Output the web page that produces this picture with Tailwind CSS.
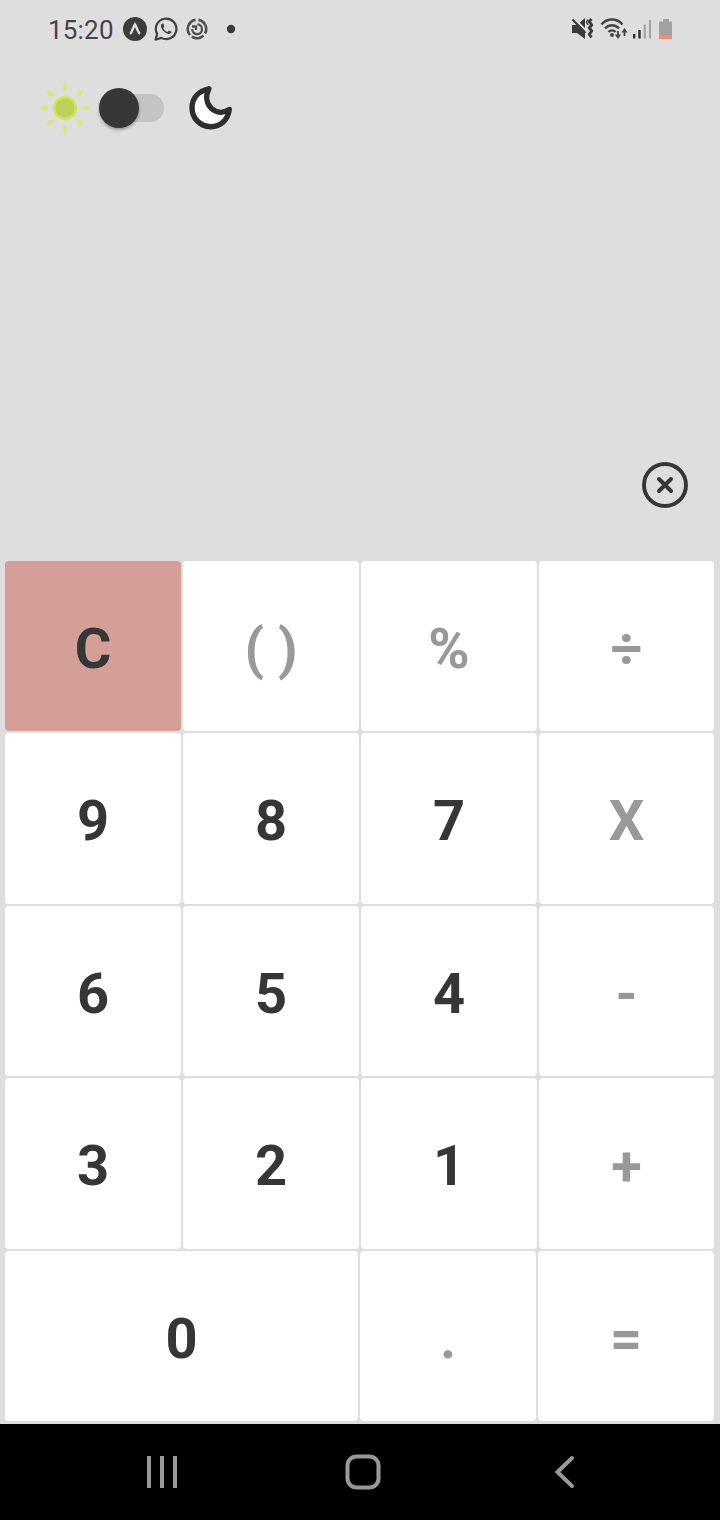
<!DOCTYPE html>
<html lang="en">
<head>
<meta charset="utf-8">
<title>Calculator</title>
<script src="https://cdn.jsdelivr.net/npm/@tailwindcss/browser@4"></script>
</head>
<body class="w-[720px] h-[1520px] overflow-hidden bg-[#dedede] font-['Roboto',sans-serif] text-[#363636] flex flex-col">

<header class="h-[58px] pl-[48px] pr-[46px] flex items-center justify-between shrink-0">
  <div class="flex items-center h-full">
    <span class="w-[75px] text-[26px] leading-none tracking-[0.2px] text-[#444] pt-px">15:20</span>
    <svg width="24" height="24" viewBox="0 0 24 24"><circle cx="12" cy="12" r="12" fill="#3c3c3c"/><path d="M7.800 16.200C9.500 13.500 10.700 9.500 12 7.500C13.300 9.500 14.500 13.500 16.200 16.200" fill="none" stroke="#dedede" stroke-width="2.400" stroke-linecap="round"/></svg>
    <svg class="ml-[7px]" width="24" height="24" viewBox="0 0 24 24"><path d="M1.500 22.700L3.200 17A10.300 10.300 0 1 1 7.200 20.900Z" fill="none" stroke="#404040" stroke-width="2.200" stroke-linejoin="round"/><path d="M8.500 6.500C7.300 6.800 6.700 8 7 9.500C7.700 13 11 16.300 14.500 17C16 17.200 17.400 16.200 17.500 14.800L14.900 13.400L13.500 15C11.700 14.300 10 12.700 9.200 10.900L10.400 9.500L9.300 6.600Z" fill="#404040"/></svg>
    <svg class="ml-[8px]" width="22" height="22" viewBox="0 0 22 22" fill="none" stroke="#505050" stroke-width="2.600"><path d="M9.500 1.900A9.200 9.200 0 0 0 4 17M5.800 18.600A9.200 9.200 0 0 0 17.500 17.600M19 15.500A9.200 9.200 0 0 0 12.500 1.900"/><path d="M6.200 11A4.900 4.900 0 1 0 11.500 6.300M6 8.500H10V12" stroke-width="2.300"/></svg>
    <svg class="ml-[18px]" width="10" height="10" viewBox="0 0 10 10"><circle cx="5" cy="5" r="4.200" fill="#3c3c3c"/></svg>
  </div>
  <div class="flex items-center h-full">
    <svg width="103" height="24" viewBox="0 0 103 24">
      <path d="M1 8H6L14 1V22L6 16H1Z" fill="#3a3a3a"/>
      <path d="M2.500 1L16 14.500" stroke="#dedede" stroke-width="2.200"/>
      <path d="M1.500 2.500L14.500 16" stroke="#3a3a3a" stroke-width="2.200"/>
      <path d="M20.500 2L18.200 4.700L20.800 8L18.200 11L20.800 14L18.200 17.300L20.500 20.500" fill="none" stroke="#3a3a3a" stroke-width="2.800" stroke-linejoin="round"/>
      <path d="M17 2.500L15.500 5L17 8" fill="none" stroke="#3a3a3a" stroke-width="1.400"/>
      <path d="M30.500 7.500C36 0.800 46 0.800 51.500 7.500M34 11.500C38 7.200 44 7.200 48 11.500M37.500 15C39.500 12.800 42.500 12.800 44.500 15" fill="none" stroke="#454545" stroke-width="2.400"/>
      <circle cx="41" cy="18" r="2" fill="#454545"/>
      <path d="M47 14V20M53.500 19V13" stroke="#454545" stroke-width="1.800"/><path d="M43.900 17.500H50.100L47 22ZM50.400 15.500H56.600L53.500 11Z" fill="#454545"/>
      <path d="M63.200 17V21.500M68.500 13V21.500" stroke="#303030" stroke-width="2.400"/>
      <path d="M73.800 7.500V21.500M79 3V21.500" stroke="#a4a4a4" stroke-width="2.200"/>
      <path d="M92 2H98V4.500H101V18H88V4.500H92Z" fill="#a2a2a2"/><path d="M88 18H101V22H88Z" fill="#f48b70"/>
    </svg>
  </div>
</header>

<section class="h-[100px] pl-[38px] flex items-center shrink-0">
  <svg width="54" height="54" viewBox="0 0 54 54">
    <circle cx="27" cy="27" r="12" fill="#cfe64e"/><circle cx="27" cy="27" r="9.500" fill="#c0ce5b"/>
    <g fill="#d9e683"><path id="ray" d="M27 1L29.800 6L28.300 10H25.700L24.200 6Z"/><use href="#ray" transform="rotate(45 27 27)"/><use href="#ray" transform="rotate(90 27 27)"/><use href="#ray" transform="rotate(135 27 27)"/><use href="#ray" transform="rotate(180 27 27)"/><use href="#ray" transform="rotate(225 27 27)"/><use href="#ray" transform="rotate(270 27 27)"/><use href="#ray" transform="rotate(315 27 27)"/></g>
  </svg>
  <div class="ml-[7px] w-[65px] h-[40px] flex items-center">
    <div class="size-[40px] shrink-0 rounded-full bg-[#363636] shadow-[0_2px_3px_rgba(0,0,0,0.3)] z-10"></div>
    <div class="-ml-[20px] w-[45px] h-[28px] shrink-0 rounded-full bg-[#c4c4c4]"></div>
  </div>
  <svg class="ml-[24px]" width="46" height="46" viewBox="0 0 46 46"><path d="M20.800 3.800C10.500 6 4 13 4 23C4 33.500 12.500 41.700 22.800 41.700C32.500 41.700 40 35 41.300 24.500C35.500 28.500 28.500 28 23.500 23.500C18.300 18.500 17.300 11 20.800 3.800Z" fill="#fff" stroke="#2e2e2e" stroke-width="5.400" stroke-linejoin="round"/></svg>
</section>

<section class="h-[403px] shrink-0 flex items-end justify-end pr-[31px] pb-[52px]">
  <svg width="48" height="48" viewBox="0 0 48 48" fill="none" stroke="#363636" stroke-linecap="round"><circle cx="24" cy="24" r="21" stroke-width="3.900"/><path d="M18 18L30 30M30 18L18 30" stroke-width="4"/></svg>
</section>

<main class="h-[863px] shrink-0 pl-[5px] pr-[6px] flex flex-col gap-[2px] text-[56px] leading-none font-bold *:flex *:gap-[2px] *:*:flex *:*:items-center *:*:justify-center *:*:rounded-[4px] *:*:bg-white *:odd:*:pt-[6px] *:even:*:pt-[4px] *:*:h-full *:*:w-[176px]">
  <div class="h-[170px]"><button class="bg-[#d49f97]!">C</button><button class="text-[#999]">( )</button><button class="text-[#999]">%</button><button class="text-[#999] w-[175px]!">÷</button></div>
  <div class="h-[171px]"><button>9</button><button>8</button><button>7</button><button class="text-[#999] w-[175px]!">X</button></div>
  <div class="h-[170px]"><button>6</button><button>5</button><button>4</button><button class="text-[#999] w-[175px]!">-</button></div>
  <div class="h-[171px]"><button>3</button><button>2</button><button>1</button><button class="text-[#999] w-[175px]!">+</button></div>
  <div class="h-[170px]"><button class="w-[353px]!">0</button><button class="text-[#999]">.</button><button class="text-[#999]">=</button></div>
</main>

<nav class="h-[96px] shrink-0 bg-black pl-[146px] pr-[144px] flex items-center">
  <svg width="32" height="34" viewBox="0 0 32 34" stroke="#999" stroke-width="4" stroke-linecap="butt"><path d="M3 1V33M16 1V33M29 1V33"/></svg>
  <svg class="ml-[167px]" width="36" height="36" viewBox="0 0 36 36" fill="none" stroke="#999" stroke-width="4"><rect x="2.500" y="2.500" width="31" height="31" rx="9"/></svg>
  <svg class="ml-auto" width="22" height="34" viewBox="0 0 22 34" fill="none" stroke="#999" stroke-width="4" stroke-linecap="round"><path d="M18 3L3.500 17L18 31"/></svg>
</nav>
</body>
</html>
